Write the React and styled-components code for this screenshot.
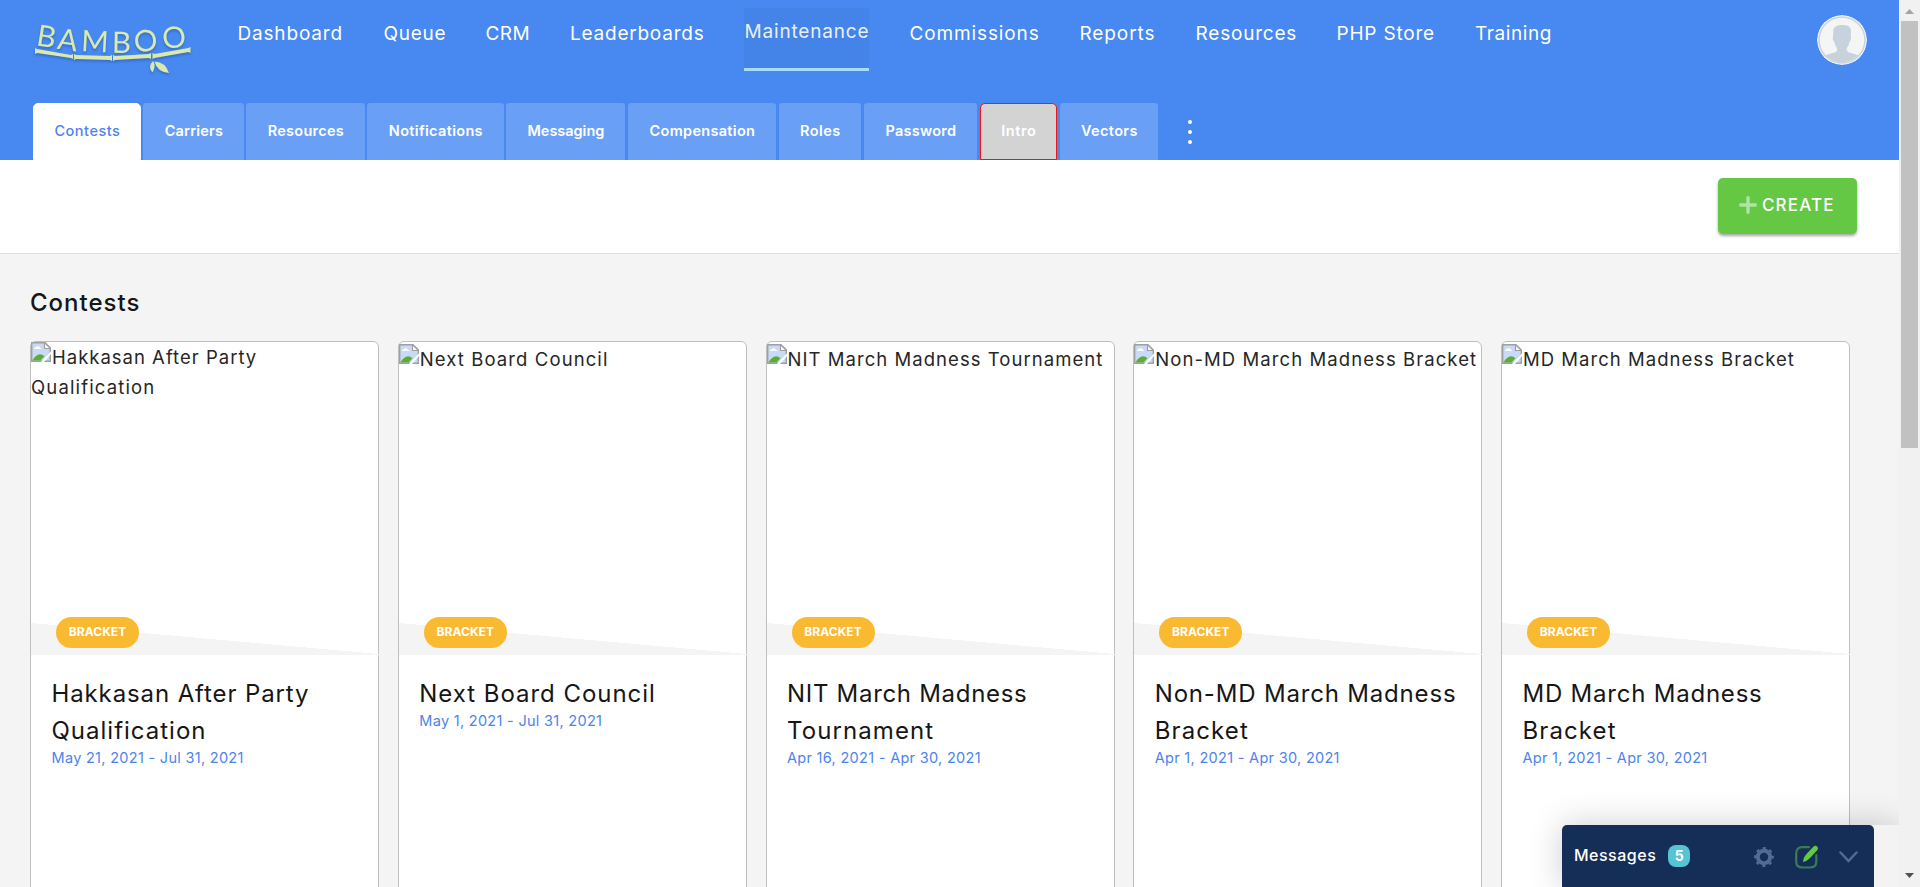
import React from 'react';
import styled, { createGlobalStyle } from 'styled-components';

const GlobalStyle = createGlobalStyle`
  *, *::before, *::after { box-sizing: border-box; }
  body { margin: 0; overflow: hidden; font-family: Inter, "Liberation Sans", sans-serif; color: #161616; }
`;

const Screen = styled.div`
  position: relative;
  display: flex;
  width: 1920px;
  height: 887px;
  overflow: hidden;
  background: #f4f4f4;
`;
const Page = styled.div`width: 1899px; display: flex; flex-direction: column; flex: none;`;

const Header = styled.header`
  height: 160px;
  background: #4788f1;
  display: flex;
  flex-direction: column;
  justify-content: space-between;
  flex: none;
`;
const TopRow = styled.div`display: flex; align-items: flex-start; padding: 0 32px 0 30px;`;
const LogoBox = styled.div`
  width: 207px;
  height: 80px;
  flex: none;
  svg { display: block; filter: drop-shadow(0 2px 1px rgba(20, 50, 110, 0.3)); }
`;
const Nav = styled.nav`display: flex; gap: 40px; flex: 1; padding-top: 8px;`;
const NavLink = styled.a`
  width: ${p => p.$w}px;
  height: 63px;
  padding-top: ${p => (p.$active ? 12 : 14)}px;
  padding-left: 0.5px;
  border-bottom: 3px solid ${p => (p.$active ? '#a9dcf8' : 'transparent')};
  background: ${p => (p.$active ? '#4484e8' : 'transparent')};
  color: ${p => (p.$active ? '#e9f0fc' : '#fff')};
  font-size: 19px;
  line-height: 24px;
  letter-spacing: ${p => p.$ls}px;
  white-space: nowrap;
`;
const Avatar = styled.div`
  width: 50px;
  height: 50px;
  margin-top: 15px;
  border-radius: 50%;
  overflow: hidden;
  flex: none;
  svg { display: block; }
`;

const Tabs = styled.div`display: flex; align-items: flex-end; padding-left: 33px;`;
const Tab = styled.a`
  width: ${p => p.$w}px;
  height: 57px;
  margin-right: ${p => p.$gap}px;
  padding-top: 18px;
  border: 1px solid ${p => ({ active: '#fff', marked: '#f01414' }[p.$kind] || 'transparent')};
  ${p => !p.$kind && 'border: 0; padding-top: 19px;'}
  border-radius: ${p => (p.$kind ? 5 : 3)}px ${p => (p.$kind ? 5 : 3)}px 0 0;
  background: ${p => ({ active: '#fff', marked: '#d3d3d3' }[p.$kind] || '#6a9ff6')};
  color: ${p => (p.$kind === 'active' ? '#4d83ee' : '#fff')};
  font-size: 14.5px;
  line-height: 18px;
  font-weight: ${p => (p.$kind === 'active' ? 500 : 600)};
  letter-spacing: ${p => p.$ls}px;
  text-indent: 0.8px;
  text-align: center;
  white-space: nowrap;
`;
const MoreDots = styled.div`
  height: 57px;
  padding: 17px 0 0 30px;
  display: flex;
  flex-direction: column;
  gap: 6px;
`;
const Dot = styled.i`width: 4px; height: 4px; border-radius: 50%; background: #fff;`;

const Toolbar = styled.div`
  height: 94px;
  background: #fff;
  border-bottom: 1px solid #dcdedd;
  padding: 18px 42px 0 0;
  display: flex;
  justify-content: flex-end;
  align-items: flex-start;
  flex: none;
`;
const CreateButton = styled.button`
  width: 139px;
  height: 56px;
  padding: 0 0 2px 21px;
  border: 0;
  border-radius: 5px;
  background: #64c844;
  box-shadow: 0 2px 3px rgba(0, 0, 0, 0.35);
  color: #fff;
  display: flex;
  align-items: center;
  gap: 5px;
  font: 500 17px/20px Inter, sans-serif;
  letter-spacing: 1.15px;
`;

const Heading = styled.h1`
  margin: 31px 0 20px 30px;
  font-size: 24px;
  line-height: 36px;
  font-weight: 500;
  letter-spacing: 1px;
`;
const Cards = styled.div`
  display: grid;
  grid-template-columns: repeat(5, 349px);
  column-gap: 18.75px;
  padding-left: 30px;
`;
const Card = styled.article`
  height: 580px;
  background: #fff;
  border: 1px solid #bfbfc2;
  border-radius: 6px;
`;
const Cover = styled.div`
  height: 313px;
  display: flex;
  flex-direction: column;
  justify-content: space-between;
`;
const AltText = styled.div`
  padding: ${p => (p.$two ? 0 : 2)}px 0 0;
  font-size: 18.5px;
  line-height: 30px;
  font-weight: 400;
  color: #262626;
  white-space: nowrap;
`;
const AltLine = styled.div`
  display: flex;
  align-items: flex-start;
  letter-spacing: ${p => p.$ls}px;
  svg { flex: none; margin-right: 1px; }
`;
const Wedge = styled.div`
  height: 32px;
  margin-right: -1px;
  padding: 0 0 0 25px;
  background: linear-gradient(to top right, #f4f4f4 49.8%, transparent 50.2%);
  border-bottom: 1px solid #f4f4f4;
`;
const Badge = styled.span`
  display: block;
  width: 83px;
  height: 31px;
  margin-top: -6px;
  border-radius: 16px;
  background: #f9b931;
  color: #fff;
  font-size: 12px;
  line-height: 30px;
  font-weight: 700;
  letter-spacing: 0.05px;
  text-align: center;
`;
const Info = styled.div`padding: 20px 0 0 20.5px;`;
const TitleLine = styled.div`
  font-size: 24px;
  line-height: 37px;
  letter-spacing: ${p => p.$ls}px;
  white-space: nowrap;
`;
const Dates = styled.div`
  font-size: 14.5px;
  line-height: 18px;
  letter-spacing: 0.3px;
  color: #4c84ee;
`;

const Dock = styled.div`
  position: absolute;
  left: 1562px;
  bottom: 0;
  width: 337px;
  height: 62px;
  display: flex;
  background: linear-gradient(to right, transparent 20px, #f3f3f3 20px);
  border-radius: 5px 0 0 0;
  box-shadow: 0 0 34px rgba(0, 0, 0, 0.2);
`;
const MessagesBar = styled.div`
  width: 312px;
  padding: 0 16px 2px 12px;
  display: flex;
  align-items: center;
  flex: none;
  border-radius: 5px 5px 0 0;
  background: #142e58;
  color: #fff;
  font-size: 16px;
  font-weight: 500;
  letter-spacing: 0.5px;
`;
const Count = styled.span`
  flex: none;
  width: 22px;
  height: 22px;
  margin: 2px auto 0 12px;
  border-radius: 8px;
  background: #54c4d6;
  font-size: 14px;
  line-height: 22px;
  font-weight: 700;
  letter-spacing: 0;
  text-align: center;
`;
const DockIcons = styled.div`display: flex; align-items: center; gap: 21px; padding-top: 4px; svg { display: block; }`;

const Scrollbar = styled.div`
  position: relative;
  z-index: 2;
  width: 21px;
  background: #f1f1f1;
  display: flex;
  flex-direction: column;
  align-items: center;
  justify-content: space-between;
`;
const Thumb = styled.div`width: 17px; height: 427px; margin-bottom: auto; background: #c1c1c1;`;
const Arrow = styled.svg`display: block; width: 21px; height: 21px; flex: none;`;

const navItems = [
  ['Dashboard', 106, 0.82], ['Queue', 62, 0.75], ['CRM', 44.5, 0.45], ['Leaderboards', 134.5, 0.77],
  ['Maintenance', 125, 0.83, true], ['Commissions', 130, 0.87], ['Reports', 76, 0.9], ['Resources', 101, 0.8],
  ['PHP Store', 98.5, 0.8], ['Training', 80, 0.6],
];
const tabs = [
  ['Contests', 108, 2, 0.5, 'active'], ['Carriers', 101, 2, 0.2], ['Resources', 119, 2, 0.27], ['Notifications', 137, 2, 0.33],
  ['Messaging', 119, 3, -0.02], ['Compensation', 148, 3, 0.3], ['Roles', 82, 3, 0.45], ['Password', 113, 3, 0.25],
  ['Intro', 77, 3, 0.6, 'marked'], ['Vectors', 98, 0, 0.35],
];
const contests = [
  { alt: [['Hakkasan After Party', 1.0], ['Qualification', 1.15]], title: [['Hakkasan After Party', 0.88], ['Qualification', 1]], dates: 'May 21, 2021 - Jul 31, 2021' },
  { alt: [['Next Board Council', 1.1]], title: [['Next Board Council', 0.96]], dates: 'May 1, 2021 - Jul 31, 2021' },
  { alt: [['NIT March Madness Tournament', 1.05]], title: [['NIT March Madness', 0.7], ['Tournament', 1.1]], dates: 'Apr 16, 2021 - Apr 30, 2021' },
  { alt: [['Non-MD March Madness Bracket', 1.08]], title: [['Non-MD March Madness', 0.82], ['Bracket', 1.1]], dates: 'Apr 1, 2021 - Apr 30, 2021' },
  { alt: [['MD March Madness Bracket', 1.03]], title: [['MD March Madness', 0.78], ['Bracket', 1.1]], dates: 'Apr 1, 2021 - Apr 30, 2021' },
];

const letters = [['B', 46.5, 36, 9], ['A', 68, 39.5, 8], ['M', 95, 41, 3], ['B', 121.5, 42, 1], ['O', 145.5, 40.5, -4], ['O', 174, 37, -9]];
const Logo = () => (
  <svg width="207" height="80" viewBox="30 0 207 80" fill="#d9ebac">
    {letters.map(([c, x, y, r], i) => (
      <text key={i} transform={`translate(${x} ${y}) rotate(${r})`} y="10.800" textAnchor="middle" fontFamily="Lato, sans-serif" fontSize="29.500">{c}</text>
    ))}
    <path d="M35 48l2 1 34 6 2-1v5l-2-1-34-5-2 1z" />
    <path d="M74 54l2 1 34 1 2-1v6l-2-1-34-1-2 1z" />
    <path d="M113 55l2 1 34-2 2-1v6l-2-1-34 2-2 1z" />
    <path d="M152.500 53l2 1 34-6 2-1v6l-2-1-34 6-2 1z" />
    <path d="M153 61q3.500 5-.5 11.500q-5-6 .5-11.500z" />
    <path d="M154.500 61.500q11 .5 14.500 11.500q-12-1-14.500-11.500z" />
  </svg>
);
const Person = () => (
  <svg width="50" height="50" viewBox="0 0 50 50">
    <circle cx="25" cy="25" r="25" fill="#f4f5f6" />
    <circle cx="25" cy="25" r="23" fill="#f4f5f5" stroke="#cbd4dd" strokeWidth="1.600" />
    <path d="M16.300 16C16 12 20 10 25 10s9.500 1 9 7l-.3 4.500q.8 1-.1 3.500q-.4 1.500-1 1.500q-.6 4.500-2.800 6.500v2.500q1 2 5 2.800q4 1 6.300 2.200A23 23 0 0 1 8.500 40.500q2.500-1.400 6-2.200q4.800-.9 5.500-2.800V33q-2.200-2-2.800-6.500q-.8 0-1.100-1.500q-.8-2.500 0-3.500z" fill="#c7d2dd" />
  </svg>
);
const BrokenImage = () => (
  <svg width="20" height="20" viewBox="0 0 20 20">
    <path d="M.7.700H14L19.300 6v13.300H.7z" fill="#c9d9f8" stroke="#a0a0a0" strokeWidth="1.400" />
    <path d="M13.500.700V6.500H19.300z" fill="#fff" stroke="#a0a0a0" strokeWidth="1.200" />
    <path d="M3 7q0-2 2-2q1-1.700 2.800-.4Q9 5 9 6q1.300 0 1.300 1z" fill="#fff" />
    <path d="M1.400 18.600Q5 12.500 9 12.300q2.500 0 4.500 2l-4 4.300z" fill="#5cae33" />
    <path d="M20 9.500V12L13 20H10z" fill="#fff" />
  </svg>
);
const Gear = () => (
  <svg width="20" height="20" viewBox="0 0 20 20" fill="none" stroke="#526a94">
    <circle cx="10" cy="10" r="6.200" strokeWidth="4" />
    <circle cx="10" cy="10" r="8.800" strokeWidth="2.200" strokeDasharray="3.200 3.711" strokeDashoffset="1.600" />
  </svg>
);
const Compose = () => (
  <svg width="23" height="24" viewBox="0 0 23 24" fill="none">
    <path d="M14 2.200H7.500Q1.200 2.200 1.200 8.500v8Q1.200 22.500 7.500 22.500H15q6.300 0 6.300-6V10" stroke="#397c55" strokeWidth="2.200" strokeLinecap="round" />
    <path d="M8 17q.2-4.500 3-7.500L18.500 1.500q2-1.700 3.700 0q1.500 1.800 0 3.800L15 13q-3 3.200-7 4z" fill="#64c844" />
  </svg>
);
const Chevron = () => (
  <svg width="19" height="12" viewBox="0 0 19 12" fill="none" stroke="#526a94" strokeWidth="2.500" strokeLinecap="round">
    <path d="M1.500 1.500l8 8.500 8-8.500" />
  </svg>
);

export default function App() {
  return (
    <Screen>
      <GlobalStyle />
      <Page>
        <Header>
          <TopRow>
            <LogoBox><Logo /></LogoBox>
            <Nav>
              {navItems.map(([label, w, ls, active]) => (
                <NavLink key={label} $w={w} $ls={ls} $active={active}>{label}</NavLink>
              ))}
            </Nav>
            <Avatar><Person /></Avatar>
          </TopRow>
          <Tabs>
            {tabs.map(([label, w, gap, ls, kind]) => (
              <Tab key={label} $w={w} $gap={gap} $ls={ls} $kind={kind}>{label}</Tab>
            ))}
            <MoreDots><Dot /><Dot /><Dot /></MoreDots>
          </Tabs>
        </Header>
        <Toolbar>
          <CreateButton>
            <svg width="18" height="18" viewBox="0 0 18 18" stroke="#b0e4a1" strokeWidth="3.400" strokeLinecap="round">
              <path d="M9 1.700v14.600M1.700 9h14.600" />
            </svg>
            CREATE
          </CreateButton>
        </Toolbar>
        <Heading>Contests</Heading>
        <Cards>
          {contests.map((c, i) => (
            <Card key={i}>
              <Cover>
                <AltText $two={c.alt.length > 1}>
                  {c.alt.map(([text, ls], n) => (
                    <AltLine key={text} $ls={ls}>{n === 0 && <BrokenImage />}{text}</AltLine>
                  ))}
                </AltText>
                <Wedge><Badge>BRACKET</Badge></Wedge>
              </Cover>
              <Info>
                {c.title.map(([text, ls]) => <TitleLine key={text} $ls={ls}>{text}</TitleLine>)}
                <Dates>{c.dates}</Dates>
              </Info>
            </Card>
          ))}
        </Cards>
      </Page>
      <Scrollbar>
        <Arrow viewBox="0 0 21 21"><path d="M6 14l4.500-5 4.500 5z" fill="#a3a3a3" /></Arrow>
        <Thumb />
        <Arrow viewBox="0 0 21 21"><path d="M6 7l4.500 5 4.500-5z" fill="#505050" /></Arrow>
      </Scrollbar>
      <Dock>
        <MessagesBar>
          Messages
          <Count>5</Count>
          <DockIcons><Gear /><Compose /><Chevron /></DockIcons>
        </MessagesBar>
      </Dock>
    </Screen>
  );
}
